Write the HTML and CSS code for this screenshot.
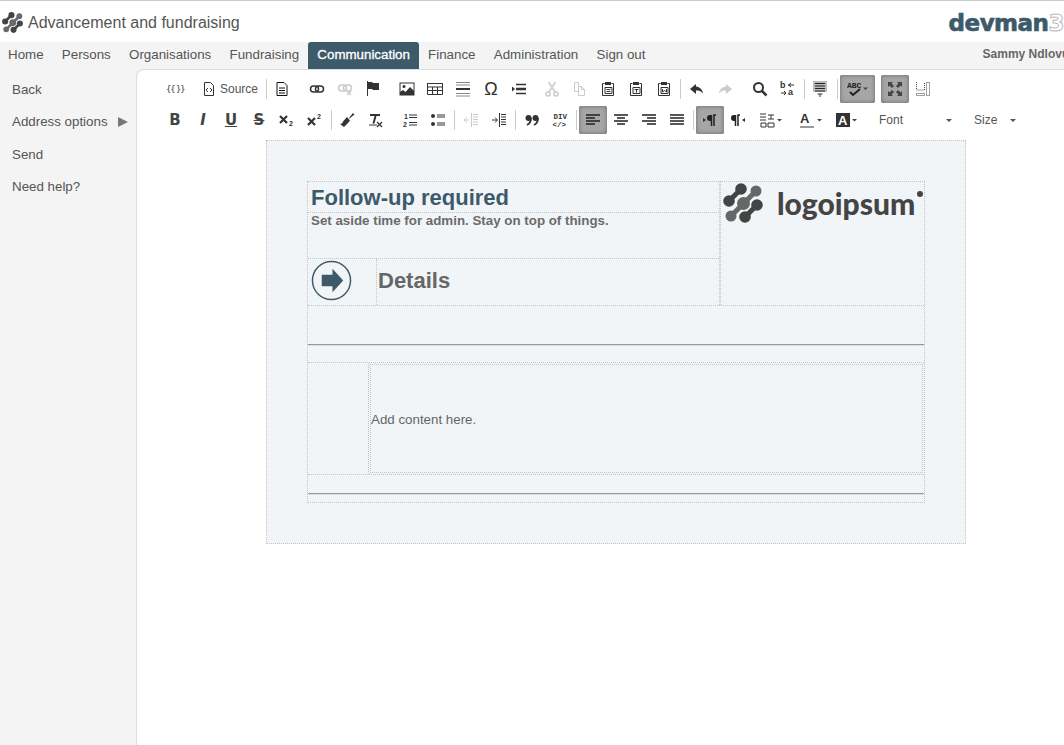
FILE: index.html
```html
<!DOCTYPE html>
<html lang="en">

<head>
  <meta charset="UTF-8">
  <title>Advancement and fundraising</title>
  <link rel="stylesheet" href="styles.css">
</head>

<body>
  <svg class="sprite" width="0" height="0">
    <symbol id="mark" viewBox="0 0 40 40">
      <g stroke-linecap="round" stroke-width="5" stroke="currentColor">
        <path d="M6 18 18 6" />
        <path d="M22 34 34 22" />
      </g>
      <g fill="currentColor">
        <circle cx="6" cy="18" r="5.800" />
        <circle cx="18" cy="6" r="5.800" />
        <circle cx="22" cy="34" r="5.800" />
        <circle cx="34" cy="22" r="5.800" />
      </g>
      <g fill="currentColor" opacity=".8">
        <path d="M8 33 33 8" stroke="currentColor" stroke-width="5" />
        <circle cx="8" cy="33" r="5.500" />
        <circle cx="20.500" cy="20.500" r="6.500" />
        <circle cx="33" cy="8" r="5.500" />
      </g>
    </symbol>
  </svg>

  <header class="top">
    <svg class="top-mark"><use href="#mark" /></svg>
    <span class="top-title">Advancement and fundraising</span>
    <span class="brand">devman<span class="brand-3">3</span></span>
  </header>

  <nav class="nav">
    <a>Home</a>
    <a>Persons</a>
    <a>Organisations</a>
    <a>Fundraising</a>
    <a class="active">Communication</a>
    <a>Finance</a>
    <a>Administration</a>
    <a>Sign out</a>
    <span class="user">Sammy Ndlovu</span>
  </nav>

  <div class="main">
    <aside class="side">
      <a>Back</a>
      <a>Address options <span class="tri"></span></a>
      <a>Send</a>
      <a>Need help?</a>
    </aside>

    <section class="content">
      <div class="bar">
        <span class="btn glyph-tpl">{{ }}</span>
        <span class="btn btn-text"><svg viewBox="0 0 16 16"><path d="M3.500 1.500h6l3 3v10h-9z" fill="none" stroke="#333" /><path d="M7 7 5 9l2 2M9 7l2 2-2 2" fill="none" stroke="#333" /></svg>Source</span>
        <i class="sep tight"></i>
        <span class="btn"><svg viewBox="0 0 16 16"><path d="M3 1.500h7l3 3v10H3zM5 7h6M5 9.500h6M5 12h6" fill="none" stroke="#111" /></svg></span>
        <span class="btn gap7"><svg viewBox="0 0 16 16"><rect x="1.500" y="5" width="8" height="6" rx="3" fill="none" stroke="#333" stroke-width="1.500" /><rect x="6.500" y="5" width="8" height="6" rx="3" fill="none" stroke="#333" stroke-width="1.500" /></svg></span>
        <span class="btn off"><svg viewBox="0 0 16 16"><rect x="1.500" y="4" width="8" height="6" rx="3" fill="none" stroke="#333" stroke-width="1.500" /><rect x="6.500" y="4" width="8" height="6" rx="3" fill="none" stroke="#333" stroke-width="1.500" /><path d="m10 10 4 4m0-4-4 4" stroke="#333" stroke-width="1.500" /></svg></span>
        <span class="btn"><svg viewBox="0 0 16 16"><path d="M2.500 0v15" stroke="#333" /><path d="M3 1h4l1 1h6v7H8L7 8H3z" fill="#333" /></svg></span>
        <span class="btn gap6"><svg viewBox="0 0 16 16"><rect x="1" y="2" width="14" height="12" fill="none" stroke="#333" /><circle cx="5" cy="5.500" r="1.500" fill="#333" /><path d="M1 14v-3l3-2 2.500 2L11 6l4 4v4z" fill="#333" /></svg></span>
        <span class="btn"><svg viewBox="0 0 16 16"><path d="M.500 2.500h15v11H.500z" fill="none" stroke="#333" /><path d="M.500 2.500h15V6H.500zM5.500 6v7.500M10.500 6v7.500M.500 9.500h15" fill="none" stroke="#333" /></svg></span>
        <span class="btn"><svg viewBox="0 0 16 16"><path d="M1 1.500h14M1 4h14M1 12.500h14M1 15h14" stroke="#888" /><path d="M1 8h14" stroke="#333" stroke-width="2" /></svg></span>
        <span class="btn glyph">&Omega;</span>
        <span class="btn"><svg viewBox="0 0 16 16"><path d="M1 5.500 4 8l-3 2.500z" fill="#333" /><path d="M5 3.500h10M5 12.500h10" stroke="#333" stroke-width="1.500" /><path d="M5 8h10" stroke="#333" stroke-width="2.500" /></svg></span>
        <span class="btn gap5 off"><svg viewBox="0 0 16 16"><path d="M4.500 1 11 11M11.500 1 5 11" stroke="#333" stroke-width="1.500" /><circle cx="4" cy="13" r="2" fill="none" stroke="#333" stroke-width="1.500" /><circle cx="12" cy="13" r="2" fill="none" stroke="#333" stroke-width="1.500" /></svg></span>
        <span class="btn off"><svg viewBox="0 0 16 16"><path d="M2.500 1.500h4v9h-4zM6.500 5.500h3l3 3v6h-6zM9.500 5.500v3h3" fill="none" stroke="#333" /></svg></span>
        <span class="btn"><svg viewBox="0 0 16 16"><path d="M4.500 2.500h-2v12h11v-12h-2" fill="none" stroke="#333" /><rect x="5" y="1" width="6" height="3" fill="#333" /><path d="M5 6.500h7v6H5zM6.500 8.500h4M6.500 10.500h4" fill="none" stroke="#333" /></svg></span>
        <span class="btn"><svg viewBox="0 0 16 16"><path d="M4.500 2.500h-2v12h11v-12h-2" fill="none" stroke="#333" /><rect x="5" y="1" width="6" height="3" fill="#333" /><path d="M5 6.500h7v6H5zM6.500 8.500h4M8.500 8.500v3" fill="none" stroke="#333" /></svg></span>
        <span class="btn"><svg viewBox="0 0 16 16"><path d="M4.500 2.500h-2v12h11v-12h-2" fill="none" stroke="#333" /><rect x="5" y="1" width="6" height="3" fill="#333" /><path d="M5 6.500h7v6H5zM6.500 8v3l2-1.500 2 1.500V8" fill="none" stroke="#333" /></svg></span>
        <i class="sep"></i>
        <span class="btn"><svg viewBox="0 0 16 16"><path d="M7 3 1 8l6 5V9.500c3 0 5 .5 7 3-.5-4-3-6.500-7-7z" fill="#333" /></svg></span>
        <span class="btn off"><svg viewBox="0 0 16 16"><path d="m9 3 6 5-6 5V9.500c-3 0-5 .5-7 3 .5-4 3-6.500 7-7z" fill="#333" /></svg></span>
        <span class="btn gap7"><svg viewBox="0 0 16 16"><circle cx="6.500" cy="6.500" r="4.500" fill="none" stroke="#333" stroke-width="2" /><path d="m10 10 4.500 4.500" stroke="#333" stroke-width="2.500" /></svg></span>
        <span class="btn"><svg viewBox="0 0 16 16"><text x="0" y="7" class="small-a">b</text><text x="8" y="14" class="small-a">a</text><path d="M8 4h6M11 2 8.500 4 11 6M1 12h5M4 10l2 2-2 2" fill="none" stroke="#333" /></svg></span>
        <i class="sep tight"></i>
        <span class="btn"><svg viewBox="0 0 16 16"><rect x="1" y="0" width="14" height="11" fill="#bbb" /><path d="M3 2.500h10M3 5h10M3 7.500h10M3 10h10" stroke="#222" /><path d="M5.500 13h5M8 13v3" stroke="#333" /></svg></span>
        <i class="sep wide"></i>
        <span class="btn btn-wide on"><svg viewBox="0 0 22 16"><text x="0" y="7" class="abc">ABC</text><path d="m3 11 3 3 7-6" fill="none" stroke="#222" stroke-width="2" /><path d="m16 6.500 5 0-2.500 2.500z" fill="#444" /></svg></span>
        <span class="btn gap6 on"><svg viewBox="0 0 16 16"><path d="M1 1h5L4.500 2.500 7 5 5 7 2.500 4.500 1 6zM15 1v5l-1.500-1.500L11 7 9 5l2.500-2.500L10 1zM1 15v-5l1.500 1.500L5 9l2 2-2.500 2.500L6 15zM15 15h-5l1.500-1.500L9 11l2-2 2.500 2.500L15 10z" fill="#444" /></svg></span>
        <span class="btn"><svg viewBox="0 0 16 16"><path d="M1.500 1v8h8V1M1.500 12.500h8v2h-8zM11.500 1.500h3v13h-3z" fill="none" stroke="#444" stroke-dasharray="1 1" /></svg></span>
      </div>

      <div class="bar">
        <span class="btn glyph-b">B</span>
        <span class="btn glyph-i">I</span>
        <span class="btn glyph-u">U</span>
        <span class="btn glyph-s">S</span>
        <span class="btn"><svg viewBox="0 0 16 16"><path d="m1 4 7 7M8 4l-7 7" stroke="#333" stroke-width="2.200" /><text x="10" y="14" class="tiny">2</text></svg></span>
        <span class="btn"><svg viewBox="0 0 16 16"><path d="m1 6 7 7M8 6l-7 7" stroke="#333" stroke-width="2.200" /><text x="10" y="7" class="tiny">2</text></svg></span>
        <i class="sep tight"></i>
        <span class="btn"><svg viewBox="0 0 16 16"><path d="m10 6 4-5 1.500 1.500-5 4z" fill="#333" /><path d="M8 5 11 8.500 9 11 5 15 1 12c1.500 0 3-1 3-2.500z" fill="#333" /></svg></span>
        <span class="btn"><svg viewBox="0 0 16 16"><path d="M3 2h10v2H9.500L7.500 11.500H5.500L7.500 4H3z" fill="#333" /><path d="M2 13h8" stroke="#333" /><path d="m10 10 5 5m0-5-5 5" stroke="#333" stroke-width="1.300" /></svg></span>
        <span class="btn gap7"><svg viewBox="0 0 16 16"><text x="2" y="7" class="tiny">1</text><text x="1" y="15" class="tiny">2</text><path d="M7 3h8M7 5.500h8M7 10.500h8M7 13h8" stroke="#333" /></svg></span>
        <span class="btn"><svg viewBox="0 0 16 16"><circle cx="3" cy="4" r="2" fill="#333" /><circle cx="3" cy="12" r="2" fill="#333" /><path d="M7 3h8M7 5h8M7 11h8M7 13h8" stroke="#333" /></svg></span>
        <i class="sep"></i>
        <span class="btn off"><svg viewBox="0 0 16 16"><path d="M8.500 1v14M10 2.500h5M10 5h5M10 7.500h5M10 10h5M10 12.500h5" stroke="#333" /><path d="M1 8h5M3.500 5.500 1 8l2.500 2.500" fill="none" stroke="#333" /></svg></span>
        <span class="btn"><svg viewBox="0 0 16 16"><path d="M8.500 1v14M10 2.500h5M10 5h5M10 7.500h5M10 10h5M10 12.500h5" stroke="#333" /><path d="M1 8h5M4 5.500 6.500 8 4 10.500" fill="none" stroke="#333" /></svg></span>
        <i class="sep"></i>
        <span class="btn"><svg viewBox="0 0 16 16"><circle cx="4.500" cy="6" r="3" fill="#333" /><circle cx="11.500" cy="6" r="3" fill="#333" /><path d="M7 6c0 4-2 6-4 7M14 6c0 4-2 6-4 7" fill="none" stroke="#333" stroke-width="1.800" /></svg></span>
        <span class="btn"><svg viewBox="0 0 16 16"><text x="1.500" y="7" class="div-t">DIV</text><text x="0.500" y="15" class="div-t">&lt;/&gt;</text></svg></span>
        <i class="sep"></i>
        <span class="btn on"><svg viewBox="0 0 16 16"><path d="M1 3h14M1 6h9M1 9h14M1 12h9" stroke="#222" stroke-width="1.600" /></svg></span>
        <span class="btn"><svg viewBox="0 0 16 16"><path d="M1 3h14M4 6h8M1 9h14M4 12h8" stroke="#222" stroke-width="1.600" /></svg></span>
        <span class="btn"><svg viewBox="0 0 16 16"><path d="M1 3h14M6 6h9M1 9h14M6 12h9" stroke="#222" stroke-width="1.600" /></svg></span>
        <span class="btn"><svg viewBox="0 0 16 16"><path d="M1 3h14M1 6h14M1 9h14M1 12h14" stroke="#222" stroke-width="1.600" /></svg></span>
        <i class="sep"></i>
        <span class="btn on"><svg viewBox="0 0 16 16"><path d="M1 6v4l3-2z" fill="#333" /><path d="M12 14V3h2M9.500 14V3" fill="none" stroke="#222" stroke-width="1.500" /><path d="M9 3H8a3 3 0 0 0 0 6h1z" fill="#222" /></svg></span>
        <span class="btn"><svg viewBox="0 0 16 16"><path d="M15 6v4l-3-2z" fill="#333" /><path d="M8 14V3h2M5.500 14V3" fill="none" stroke="#222" stroke-width="1.500" /><path d="M5 3H4a3 3 0 0 0 0 6h1z" fill="#222" /></svg></span>
        <span class="btn btn-lang"><svg viewBox="0 0 24 16"><path d="M1 2h6M1 5h6M1 8h6M2 11h5v4H2zM9 3h6M12 3v4M9 7h6M9 11h6v4H9z" fill="none" stroke="#333" /><path d="m18 7 5 0-2.500 2.500z" fill="#444" /></svg></span>
        <span class="btn btn-color color-a"><svg viewBox="0 0 24 16"><text x="0" y="11" class="big-a">A</text><path d="M0 15h14" stroke="#999" stroke-width="2" /><path d="m17 7 5 0-2.500 2.500z" fill="#444" /></svg></span>
        <span class="btn btn-color color-b"><svg viewBox="0 0 24 16"><rect x="1" y="1" width="14" height="14" fill="#333" /><text x="3" y="12.500" class="big-a inv">A</text><path d="m17 7 5 0-2.500 2.500z" fill="#444" /></svg></span>
        <span class="combo combo-font">Font<i class="arrow"></i></span>
        <span class="combo combo-size">Size<i class="arrow"></i></span>
      </div>

      <div class="canvas">
        <div class="frame">
          <div class="row-top">
            <div class="head">
              <h1 class="title">Follow-up required</h1>
              <div class="subtitle">Set aside time for admin. Stay on top of things.</div>
              <div class="details">
                <div class="details-icon">
                  <svg width="41" height="41" viewBox="0 0 42 42">
                    <circle cx="21" cy="21" r="19.500" fill="none" stroke="#3c5a6a" stroke-width="1.500" />
                    <path d="M11 15h11V9l11 12-11 12v-6H11z" fill="#3c5a6a" />
                  </svg>
                </div>
                <div class="details-text">Details</div>
              </div>
            </div>
            <div class="logo">
              <svg class="logo-mark"><use href="#mark" /></svg>
              <span class="logo-text">logoipsum</span><i class="logo-dot"></i>
            </div>
          </div>
          <div class="row-rule row-rule-a"><hr></div>
          <div class="row-body">
            <div class="body-gutter"></div>
            <div class="body-text">Add content here.</div>
          </div>
          <div class="row-rule row-rule-b"><hr></div>
        </div>
      </div>
    </section>
  </div>
</body>

</html>
```

FILE: styles.css
```css
* {
  box-sizing: border-box;
}

html,
body {
  height: 100%;
}

body {
  margin: 0;
  overflow: hidden;
  background: #fff;
  color: #555;
  font-family: "Liberation Sans", Arial, sans-serif;
  display: flex;
  flex-direction: column;
}

.sprite {
  position: absolute;
}

.top {
  height: 42px;
  flex: none;
  border-top: 1px solid #ccc;
  display: flex;
  align-items: center;
  padding: 2px 0 0 2px;
  white-space: nowrap;
  overflow: hidden;
}

.top-mark {
  width: 21px;
  height: 21px;
  color: #444;
}

.top-title {
  margin-left: 5px;
  font-size: 16px;
  color: #555;
}

.brand {
  margin-left: auto;
  font-family: "DejaVu Sans", sans-serif;
  font-weight: bold;
  font-size: 23px;
  letter-spacing: -.5px;
  color: #3c5a6a;
  -webkit-text-stroke: .7px #3c5a6a;
}

.brand-3 {
  color: #fff;
  -webkit-text-stroke: 1px #bbb;
}

.nav {
  height: 27px;
  flex: none;
  background: #f4f4f4;
  display: flex;
  white-space: nowrap;
  overflow: hidden;
  font-size: 13.330px;
}

.nav a {
  padding: 0 9.150px;
  line-height: 25px;
  color: #555;
}

.nav a:first-child {
  padding-left: 8px;
}

.nav a.active {
  padding: 0 9px;
  background: #3c5a6a;
  color: #fff;
  -webkit-text-stroke: .3px #fff;
  border-radius: 3px 3px 0 0;
}

.user {
  margin-left: 328px;
  line-height: 25px;
  font-size: 12px;
  font-weight: bold;
  color: #666;
}

.main {
  flex: 1;
  display: flex;
  background: #f4f4f4;
  min-height: 0;
}

.side {
  width: 136px;
  flex: none;
  padding-top: 5px;
  font-size: 13.330px;
}

.side a {
  display: block;
  padding-left: 12px;
  height: 32.300px;
  line-height: 32px;
  color: #555;
}

.tri {
  display: inline-block;
  margin-left: 7px;
  vertical-align: -1px;
  border-left: 10px solid #777;
  border-top: 5px solid transparent;
  border-bottom: 5px solid transparent;
}

.content {
  flex: 1;
  min-width: 0;
  background: #fff;
  border-left: 1px solid #ddd;
  border-top: 1px solid #ddd;
  border-top-left-radius: 8px;
  padding: 5px 0 0 24px;
}

.bar {
  display: flex;
  align-items: center;
  height: 28px;
  margin-bottom: 3px;
  white-space: nowrap;
}

.btn {
  width: 28px;
  height: 28px;
  flex: none;
  display: flex;
  align-items: center;
  justify-content: center;
  color: #333;
}

.btn svg {
  width: 16px;
  height: 16px;
}

.off svg {
  opacity: .25;
}

.on {
  background: #a6a6a6;
  box-shadow: inset 0 0 4px #666;
  border-radius: 2px;
}

.btn-text {
  width: 75px;
  gap: 3px;
  justify-content: flex-start;
  padding-left: 12px;
  font-size: 12px;
  color: #555;
}

.btn-wide {
  width: 35px;
}

.btn-wide svg {
  width: 22px;
}

.btn-lang {
  width: 28px;
  margin-left: 5px;
}

.btn-lang svg,
.btn-color svg {
  width: 24px;
}

.btn-color {
  width: 26px;
}

.color-a {
  margin-left: 14px;
}

.color-b {
  margin-left: 9px;
}

.gap5 {
  margin-left: 5px;
}

.gap6 {
  margin-left: 6px;
}

.gap7 {
  margin-left: 7px;
}

.sep {
  width: 1px;
  height: 20px;
  flex: none;
  margin: 0 2px;
  background: #ccc;
}

.sep.tight {
  margin: 0 1px 0 2px;
}

.sep.wide {
  margin: 0 2px 0 3px;
}

.glyph {
  font-size: 18px;
  color: #333;
}

.glyph-tpl {
  font: 9px "DejaVu Sans", sans-serif;
  letter-spacing: -1.500px;
  color: #444;
}

.glyph-b,
.glyph-i,
.glyph-u,
.glyph-s {
  font-family: "DejaVu Sans", sans-serif;
  font-weight: bold;
  font-size: 15px;
  color: #444;
}

.glyph-i {
  font-style: italic;
}

.glyph-u {
  text-decoration: underline;
}

.glyph-s {
  text-decoration: line-through;
}

.tiny {
  font: bold 7px "Liberation Sans", sans-serif;
  fill: #333;
}

.small-a {
  font: bold 9px "Liberation Sans", sans-serif;
  fill: #333;
}

.div-t {
  font: bold 7.500px "Liberation Mono", monospace;
  fill: #333;
}

.abc {
  font: bold 8px "Liberation Mono", monospace;
  fill: #222;
}

.big-a {
  font: bold 13px "Liberation Sans", sans-serif;
  fill: #333;
}

.big-a.inv {
  fill: #fff;
}

.combo {
  height: 28px;
  flex: none;
  display: flex;
  align-items: center;
  font-size: 12px;
  color: #555;
  position: relative;
}

.combo-font {
  width: 95px;
  margin-left: 19px;
}

.combo-size {
  width: 50px;
}

.arrow {
  position: absolute;
  right: 22px;
  top: 13px;
  border-top: 3px solid #555;
  border-left: 3px solid transparent;
  border-right: 3px solid transparent;
}

.combo-size .arrow {
  right: 8px;
}

.canvas {
  margin-left: 105px;
  margin-top: 6px;
  width: 700px;
  height: 404px;
  padding: 40px;
  border: 1px dotted #c4c4c4;
  background: #f2f5f8;
}

.frame {
  width: 618px;
  border: 1px dotted #c4c4c4;
}

.row-top {
  display: flex;
  height: 124px;
  border-bottom: 1px dotted #c4c4c4;
}

.head {
  width: 412px;
  flex: none;
  border-right: 1px dotted #c4c4c4;
  display: flex;
  flex-direction: column;
}

.title {
  height: 32px;
  margin: 0;
  padding: 4px 0 0 3px;
  font-size: 22px;
  line-height: 24px;
  color: #3c5a6a;
  border-bottom: 1px dotted #c4c4c4;
}

.subtitle {
  height: 48px;
  padding: 0 0 0 3px;
  font-size: 13.330px;
  font-weight: bold;
  line-height: 15px;
  color: #6b6b6b;
  border-bottom: 1px dotted #c4c4c4;
}

.details {
  flex: 1;
  display: flex;
}

.details-icon {
  width: 69px;
  flex: none;
  padding: 1px 0 0 3px;
  border-right: 1px dotted #c4c4c4;
}

.details-text {
  padding-left: 1px;
  font-size: 22px;
  font-weight: bold;
  line-height: 44px;
  color: #666;
}

.logo {
  flex: 1;
  display: flex;
  align-items: flex-start;
  border-left: 1px dotted #c4c4c4;
  padding: 1px 0 0 2px;
  color: #444;
  position: relative;
}

.logo-mark {
  width: 40px;
  height: 40px;
}

.logo-text {
  margin-left: 14px;
  font-family: "Lato", sans-serif;
  font-weight: 900;
  font-size: 30px;
  line-height: 40px;
}

.logo-dot {
  position: absolute;
  right: 1px;
  top: 9px;
  width: 6px;
  height: 6px;
  border-radius: 50%;
  background: #444;
}

.row-rule hr {
  margin: 0;
  border: 0;
  border-top: 1px solid #999;
  border-bottom: 1px solid #ddd;
  height: 2px;
}

.row-rule-a {
  height: 57px;
  padding-top: 38px;
  border-bottom: 1px dotted #c4c4c4;
}

.row-rule-b {
  height: 27px;
  padding-top: 18px;
}

.row-body {
  display: flex;
  height: 112px;
  border-bottom: 1px dotted #c4c4c4;
}

.body-gutter {
  width: 61px;
  flex: none;
  border-right: 1px dotted #c4c4c4;
}

.body-text {
  flex: 1;
  margin: 1px 1px 1px 1px;
  border: 1px dotted #c4c4c4;
  padding-top: 2px;
  display: flex;
  align-items: center;
  font-size: 13.330px;
  color: #666;
}
```
